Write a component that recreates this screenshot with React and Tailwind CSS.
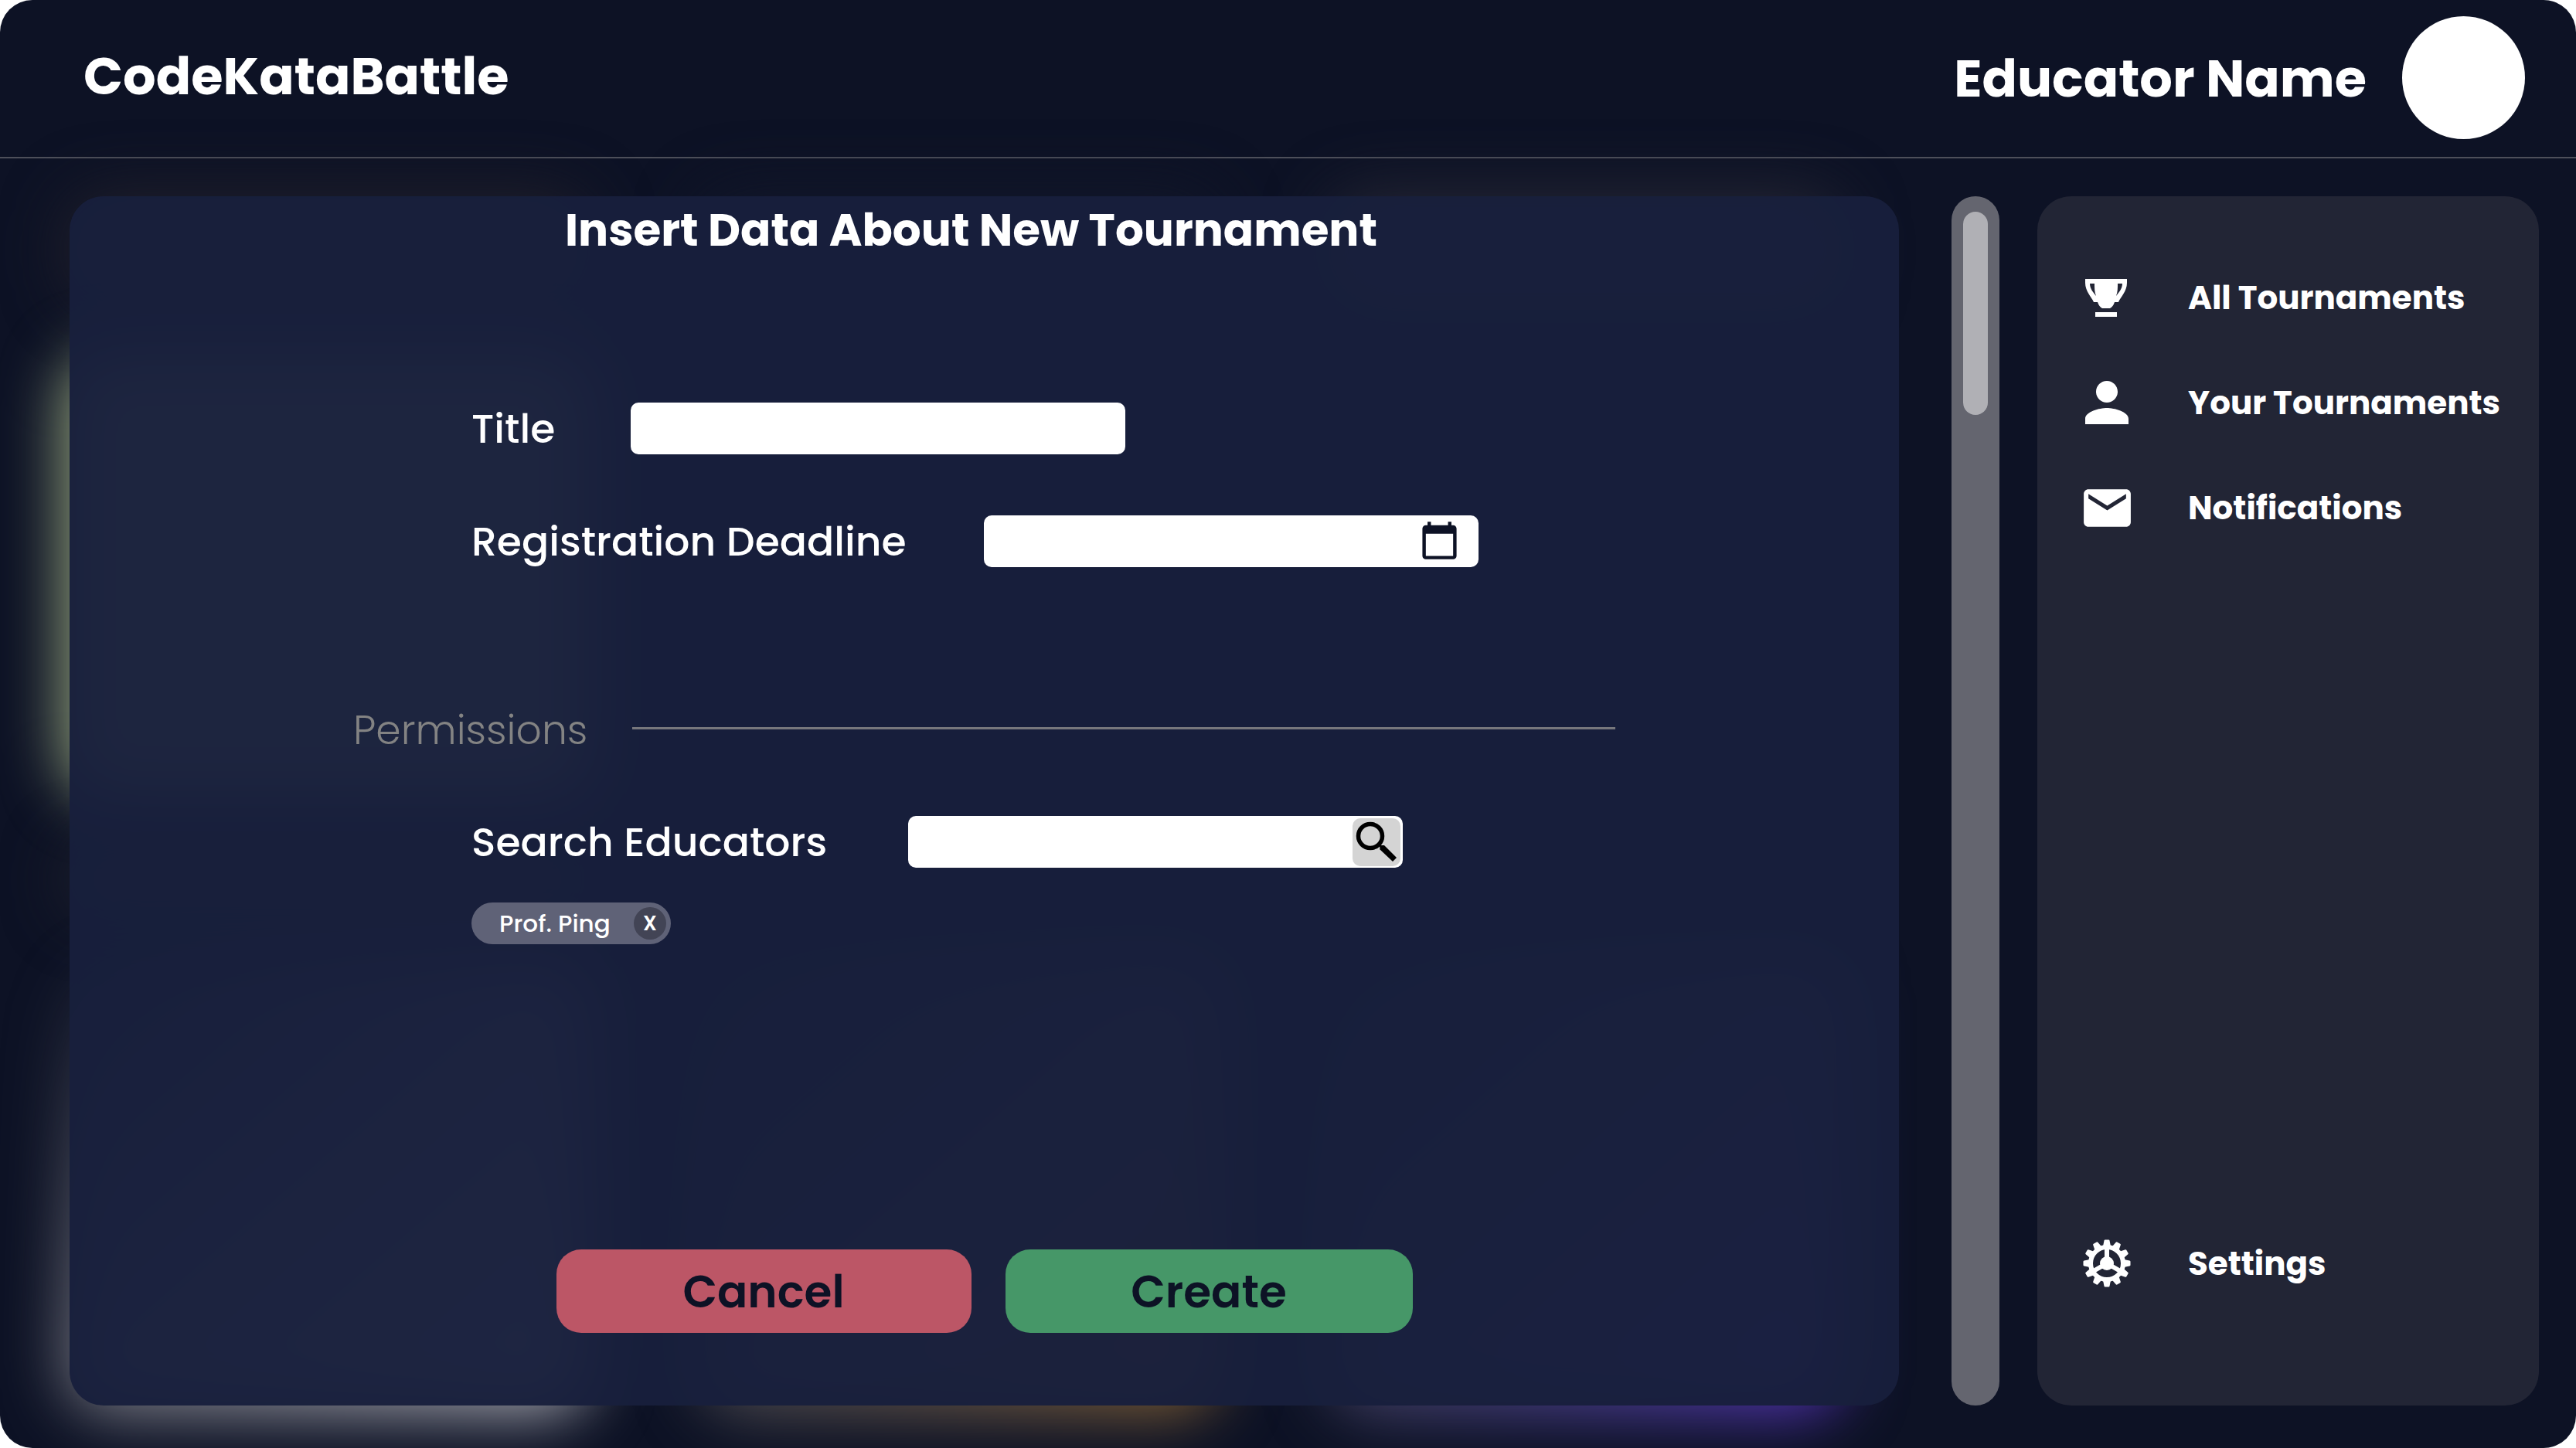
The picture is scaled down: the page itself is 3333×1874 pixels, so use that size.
import { MdCalendarToday, MdEmail, MdPerson } from "react-icons/md";

function TrophyIcon() {
  return (
    <svg viewBox="0 0 84 84" className="size-[84px]" fill="currentColor" aria-hidden="true">
      <path
        fillRule="evenodd"
        d="M14 18H68V23C68 34 60 41 57 48H52Q50 54 46 56H36Q32 54 30 48H25C22 41 14 34 14 23ZM20 24C20 31 25 36 28 40C26 35 26 30 26 24ZM56 24C56 30 56 35 54 40C57 36 62 31 62 24Z"
      />
      <rect x="27" y="61" width="28" height="6" />
    </svg>
  );
}

function GearIcon() {
  const teeth = [0, 30, 60, 90, 120, 150, 180, 210, 240, 270, 300, 330];
  return (
    <svg viewBox="-42 -42 84 84" className="size-[84px]" fill="currentColor" aria-hidden="true">
      {teeth.map((angle) => (
        <path key={angle} transform={`rotate(${angle})`} d="M-5 -22L-3.5 -29.5Q-3.3 -30.5 -2.3 -30.5H2.3Q3.3 -30.5 3.5 -29.5L5 -22Z" />
      ))}
      <circle r="21" fill="none" stroke="currentColor" strokeWidth="6" />
      <circle r="9" />
      {[0, 120, 240].map((angle) => (
        <rect key={angle} transform={`rotate(${angle})`} x="-3" y="-20" width="6" height="20" />
      ))}
    </svg>
  );
}

function SearchIcon() {
  return (
    <svg viewBox="0 0 62 62" className="size-full" aria-hidden="true">
      <circle cx="23" cy="23" r="15.5" fill="none" stroke="#000" strokeWidth="5.500" />
      <path d="M35 35H41L57 51L52 56L35.500 40.500Z" fill="#000" />
    </svg>
  );
}

function NavItem({ icon, children }) {
  return (
    <a href="#" className="flex h-[84px] items-center gap-[63px] whitespace-nowrap text-[42px] font-bold">
      <span className="flex size-[84px] shrink-0 items-center justify-center">{icon}</span>
      {children}
    </a>
  );
}

function Glow() {
  return (
    <div
      aria-hidden="true"
      className="absolute inset-0 grid grid-cols-[676fr_670fr_665fr] grid-rows-[150fr_580fr_90fr_590fr] gap-x-[140px] gap-y-[60px] pb-[46px] pl-[84px] pr-[948px] pt-[44px]"
    >
      <div className="rounded-[60px] bg-[#201f2a] blur-[40px]" />
      <div className="rounded-[60px] bg-[#12172a] blur-[40px]" />
      <div className="rounded-[60px] bg-[#252634] blur-[40px]" />
      <div className="rounded-[60px] bg-[#99a97f] blur-[40px]" />
      <div />
      <div />
      <div className="rounded-[60px] bg-[#20222c] blur-[40px]" />
      <div />
      <div />
      <div className="rounded-[60px] bg-linear-to-br from-transparent via-[#7c7d86] to-[#b6b7bf] blur-[40px]" />
      <div className="rounded-[60px] bg-linear-to-br from-transparent via-[#4c4b52] to-[#8c642c] blur-[40px]" />
      <div className="rounded-[60px] bg-linear-to-br from-transparent via-[#444263] to-[#5a2ec8] blur-[40px]" />
    </div>
  );
}

const inputClass = "h-[67px] w-[640px] rounded-[10px] bg-white px-6 text-[40px] text-[#0d1225] outline-none";

export default function App() {
  return (
    <div className="flex min-h-screen flex-col overflow-hidden rounded-[42px] bg-[#0d1225] font-['Poppins','Inter',sans-serif] text-white">
      <header className="flex h-[205px] shrink-0 items-center justify-between border-b-2 border-[#4d4f5a] pb-[3px] pl-[108px] pr-[66px]">
        <a href="#" className="pb-0.5 text-[67px] font-bold">CodeKataBattle</a>
        <div className="flex items-center gap-[46px]">
          <span className="pt-1 text-[67px] font-bold">Educator Name</span>
          <div className="size-[159px] rounded-full bg-white" />
        </div>
      </header>

      <main className="relative flex flex-1 pb-[55px] pl-[90px] pr-[48px] pt-[49px]">
        <Glow />

        <form className="relative mr-[68px] flex flex-1 flex-col rounded-[44px] bg-[#181f3c]/96 px-[367px] pb-[94px]">
          <h1 className="pr-[34px] text-center text-[58px] font-bold leading-[88px]">
            Insert Data About New Tournament
          </h1>

          <div className="mt-[179px] flex flex-col gap-[79px] pl-[153px]">
            <div className="flex items-center">
              <label htmlFor="title" className="min-w-[206px] text-[52px] font-medium leading-[67px]">Title</label>
              <input id="title" type="text" className={inputClass} />
            </div>
            <div className="flex items-center">
              <label htmlFor="deadline" className="min-w-[663px] text-[52px] font-medium leading-[67px]">
                Registration Deadline
              </label>
              <div className="relative">
                <input id="deadline" type="text" className={inputClass} />
                <button type="button" aria-label="Pick a date" className="absolute right-6 top-1.5 text-[#0d1225]">
                  <MdCalendarToday size={53} />
                </button>
              </div>
            </div>
          </div>

          <div className="mt-[175px] flex items-center gap-[61px]">
            <h2 className="w-[300px] whitespace-nowrap pt-1.5 text-[52px] font-light leading-[60px] text-[#838383]">
              Permissions
            </h2>
            <div className="h-[3px] flex-1 bg-[#77777c]" />
          </div>

          <div className="mt-[81px] flex items-center pl-[153px]">
            <label htmlFor="educators" className="min-w-[565px] text-[52px] font-medium leading-[67px]">
              Search Educators
            </label>
            <div className="relative">
              <input id="educators" type="text" className={inputClass} />
              <button
                type="button"
                aria-label="Search"
                className="absolute right-[3px] top-[3px] size-[62px] rounded-[10px] bg-[#d4d4d4]"
              >
                <SearchIcon />
              </button>
            </div>
          </div>

          <div className="mt-[45px] pl-[153px]">
            <div className="flex h-[54px] w-[258px] items-center justify-between rounded-full bg-[#5f6277] pl-9 pr-1.5 text-[31px] font-medium">
              Prof. Ping
              <button
                type="button"
                aria-label="Remove Prof. Ping"
                className="flex size-[42px] items-center justify-center rounded-full bg-[#424455] text-[26px] font-semibold"
              >
                X
              </button>
            </div>
          </div>

          <div className="mt-auto flex justify-center gap-11 text-[58px] font-semibold text-[#0d1225]">
            <button type="button" className="h-[108px] w-[537px] rounded-[32px] bg-[#bc5666]">Cancel</button>
            <button type="submit" className="h-[108px] w-[527px] rounded-[32px] bg-[#469768]">Create</button>
          </div>
        </form>

        <div
          role="scrollbar"
          aria-label="Form scroll position"
          aria-controls="title"
          aria-valuenow={0}
          className="relative mr-[49px] flex w-[62px] justify-center rounded-full bg-[#64656f] pt-5"
        >
          <div className="h-[263px] w-[32px] rounded-full bg-[#b0b0b5]" />
        </div>

        <nav className="relative flex w-[649px] flex-col gap-[52px] rounded-[44px] bg-[#222535] pb-[142px] pl-[48px] pt-[89px]">
          <NavItem icon={<TrophyIcon />}>All Tournaments</NavItem>
          <NavItem icon={<MdPerson size={84} />}>Your Tournaments</NavItem>
          <NavItem icon={<MdEmail size={73} />}>Notifications</NavItem>
          <div className="mt-auto">
            <NavItem icon={<GearIcon />}>Settings</NavItem>
          </div>
        </nav>
      </main>
    </div>
  );
}
